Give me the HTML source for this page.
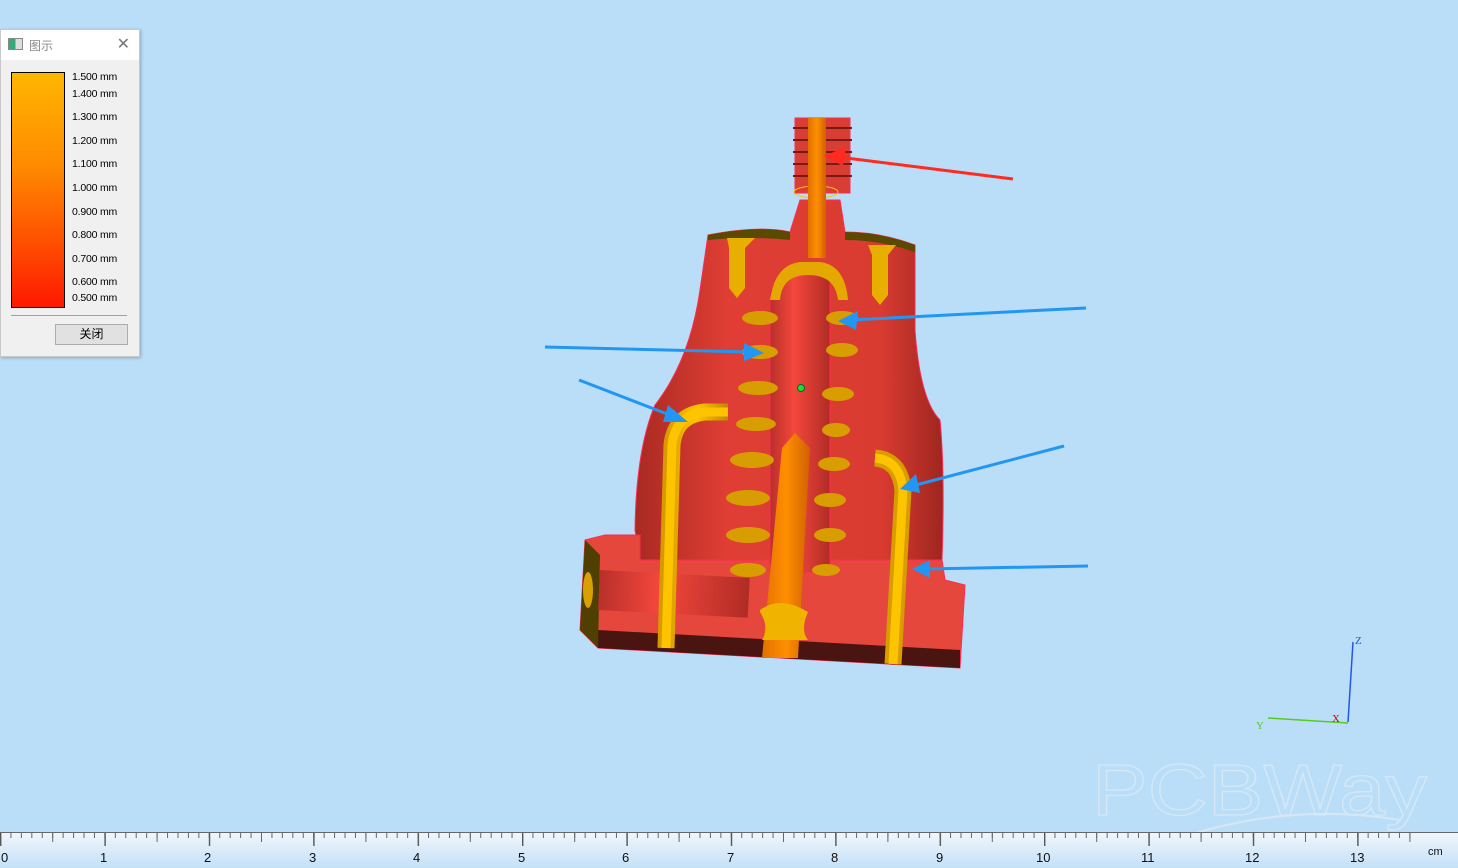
<!DOCTYPE html>
<html><head><meta charset="utf-8"><style>
html,body{margin:0;padding:0}
body{width:1458px;height:868px;background:#bbdef8;position:relative;overflow:hidden;font-family:"Liberation Sans","Noto Sans CJK SC",sans-serif}
#leg{position:absolute;left:0;top:29px;width:138px;height:326px;background:#f0f0f0;border:1px solid #c8c8c8;box-shadow:1px 1px 3px rgba(0,0,0,.25)}
#leg .tb{height:30px;background:#fff;position:relative;font-size:12px;color:#888}
.lbl{position:absolute;left:71px;font-size:10.5px;color:#000;white-space:nowrap;letter-spacing:-0.2px}
</style></head><body>
<svg width="1458" height="868" style="position:absolute;left:0;top:0">
<defs>
<linearGradient id="rul" x1="0" y1="0" x2="0" y2="1"><stop offset="0" stop-color="#f2f7fc"/><stop offset="1" stop-color="#c4e0f8"/></linearGradient>
<linearGradient id="cyl" x1="0" y1="0" x2="1" y2="0"><stop offset="0" stop-color="#b8302a"/><stop offset=".4" stop-color="#f4473c"/><stop offset="1" stop-color="#b02c25"/></linearGradient>
<linearGradient id="yel" x1="0" y1="0" x2="1" y2="0"><stop offset="0" stop-color="#d89a00"/><stop offset=".5" stop-color="#ffc400"/><stop offset="1" stop-color="#c08800"/></linearGradient>
<linearGradient id="org" x1="0" y1="0" x2="1" y2="0"><stop offset="0" stop-color="#e27000"/><stop offset=".5" stop-color="#ff8f00"/><stop offset="1" stop-color="#d06000"/></linearGradient>
<linearGradient id="body" x1="0" y1="0" x2="1" y2="0"><stop offset="0" stop-color="#a82a22"/><stop offset=".3" stop-color="#e03e34"/><stop offset=".8" stop-color="#d93b31"/><stop offset="1" stop-color="#9e261f"/></linearGradient>
<pattern id="minor" x="0" y="833" width="10.44" height="20" patternUnits="userSpaceOnUse"><rect x="0" y="0" width="1" height="5" fill="#666"/></pattern>
<pattern id="half" x="52.2" y="833" width="104.4" height="20" patternUnits="userSpaceOnUse"><rect x="0" y="0" width="1" height="9" fill="#666"/></pattern>
<pattern id="major" x="0" y="833" width="104.4" height="20" patternUnits="userSpaceOnUse"><rect x="0" y="0" width="1.4" height="13" fill="#555"/></pattern>
</defs>
<!-- model body -->
<path d="M708,235 Q760,225 790,232 L800,200 L840,200 L845,232 Q880,232 915,245 L915,330 Q920,400 940,420 Q945,470 942,560 L640,560 L635,530 Q636,450 655,405 Q690,360 700,290 Z" fill="url(#body)" stroke="#ff2a55" stroke-width="1"/>
<path d="M708,235 Q760,225 790,232 L790,240 Q750,236 708,240 Z" fill="#5a4a00"/>
<path d="M845,232 Q880,232 915,245 L915,252 Q880,240 845,240Z" fill="#5a4a00"/>
<!-- base -->
<path d="M585,540 L605,535 L640,535 L640,560 L942,560 L945,580 L965,585 L960,668 L598,648 L580,630 Z" fill="#e5473c" stroke="#ff2a55"/>
<path d="M598,630 L960,650 L960,668 L598,648 Z" fill="#4a1410"/>
<path d="M585,540 L600,555 L598,648 L580,630 Z" fill="#4f3f00"/>
<ellipse cx="588" cy="590" rx="5" ry="18" fill="#d8a000"/>
<rect x="600" y="570" width="150" height="40" fill="url(#cyl)" transform="rotate(3 600 570)"/>
<!-- threaded top -->
<rect x="795" y="118" width="55" height="75" fill="#d83e34" stroke="#ff2a55"/>
<g stroke="#7a1a14" stroke-width="2"><line x1="793" y1="128" x2="852" y2="128"/><line x1="793" y1="140" x2="852" y2="140"/><line x1="793" y1="152" x2="852" y2="152"/><line x1="793" y1="164" x2="852" y2="164"/><line x1="793" y1="176" x2="852" y2="176"/></g>
<ellipse cx="816" cy="192" rx="22" ry="6" fill="none" stroke="#ffc400"/>
<!-- inner cylinder -->
<path d="M783,280 Q805,262 830,280 L830,572 L770,572 L770,290 Z" fill="url(#cyl)" stroke="#ff2a55"/>
<path d="M770,300 Q775,265 800,262 L820,262 Q845,265 848,300 L838,300 Q835,275 808,275 Q782,275 780,300Z" fill="#e4a800"/>
<!-- fins -->
<g fill="#d89d00">
<ellipse cx="760" cy="318" rx="18" ry="7"/><ellipse cx="842" cy="318" rx="16" ry="7"/>
<ellipse cx="760" cy="352" rx="18" ry="7"/><ellipse cx="842" cy="350" rx="16" ry="7"/>
<ellipse cx="758" cy="388" rx="20" ry="7"/><ellipse cx="838" cy="394" rx="16" ry="7"/>
<ellipse cx="756" cy="424" rx="20" ry="7"/><ellipse cx="836" cy="430" rx="14" ry="7"/>
<ellipse cx="752" cy="460" rx="22" ry="8"/><ellipse cx="834" cy="464" rx="16" ry="7"/>
<ellipse cx="748" cy="498" rx="22" ry="8"/><ellipse cx="830" cy="500" rx="16" ry="7"/>
<ellipse cx="748" cy="535" rx="22" ry="8"/><ellipse cx="830" cy="535" rx="16" ry="7"/>
<ellipse cx="748" cy="570" rx="18" ry="7"/><ellipse cx="826" cy="570" rx="14" ry="6"/>
</g>
<!-- central orange rod -->
<rect x="808" y="118" width="18" height="140" fill="url(#org)"/>
<path d="M782,448 L795,433 L810,448 L798,658 L762,658Z" fill="url(#org)"/>
<path d="M760,610 Q780,595 808,612 Q800,630 808,640 L762,640 Q770,628 760,612Z" fill="#f0b400"/>
<!-- bolts -->
<path d="M727,238 L755,238 L745,248 L745,288 L737,298 L729,288 L729,248Z" fill="#e8ae00"/>
<path d="M868,245 L896,245 L888,255 L888,295 L880,305 L872,295 L872,255Z" fill="#e8ae00"/>
<!-- yellow U pipes -->
<path d="M666,648 L672,445 Q675,415 705,412 L728,412" fill="none" stroke="url(#yel)" stroke-width="17"/>
<path d="M666,648 L672,445 Q675,415 705,412 L728,412" fill="none" stroke="#ffc400" stroke-width="9"/>
<path d="M893,664 L903,490 Q900,460 875,458" fill="none" stroke="#d89d00" stroke-width="17"/>
<path d="M893,664 L903,490 Q900,460 875,458" fill="none" stroke="#ffc400" stroke-width="9"/>
<circle cx="801" cy="388" r="3.5" fill="#20e020" stroke="#064"/>
<!-- arrows -->
<g fill="#2196f3" stroke="#2196f3" stroke-width="3">
<line x1="1086" y1="308" x2="850" y2="320"/><path d="M838,321 L858,311 L856,330Z" stroke="none"/>
<line x1="545" y1="347" x2="750" y2="352"/><path d="M764,353 L744,343 L744,361Z" stroke="none"/>
<line x1="579" y1="380" x2="675" y2="417"/><path d="M688,422 L668,405 L663,422Z" stroke="none"/>
<line x1="1064" y1="446" x2="912" y2="486"/><path d="M900,489 L916,474 L920,493Z" stroke="none"/>
<line x1="1088" y1="566" x2="925" y2="569"/><path d="M912,569 L930,560 L930,578Z" stroke="none"/>
</g>
<line x1="1013" y1="179" x2="838" y2="157" stroke="#ff2a20" stroke-width="3"/>
<path d="M824,156 L846,147 L843,166Z" fill="#ff2a20"/>
<!-- axes -->
<polyline points="1348,722 1353,642" stroke="#2255ee" fill="none" stroke-width="1.5"/>
<text x="1355" y="644" font-size="11" fill="#2255ee" font-family="Liberation Serif">Z</text>
<polyline points="1268,718 1348,723" stroke="#55cc22" fill="none" stroke-width="1.5"/>
<text x="1256" y="729" font-size="11" fill="#55cc22" font-family="Liberation Serif">Y</text>
<text x="1332" y="722" font-size="11" fill="#cc0000" font-family="Liberation Serif">X</text>
<!-- watermark -->
<text x="1092" y="815" font-size="72" fill="none" stroke="#d6e8f6" stroke-width="1.2" font-family="Liberation Sans" textLength="335" lengthAdjust="spacingAndGlyphs">PCBWay</text>
<path d="M1160,845 Q1280,800 1400,820" fill="none" stroke="#d6e8f6" stroke-width="2"/>
<!-- ruler -->
<rect x="0" y="832" width="1458" height="36" fill="url(#rul)"/>
<line x1="0" y1="832.5" x2="1458" y2="832.5" stroke="#666"/>
<rect x="0" y="833" width="1414" height="5" fill="url(#minor)"/>
<rect x="0" y="833" width="1414" height="9" fill="url(#half)"/>
<rect x="0" y="833" width="1414" height="13" fill="url(#major)"/>
<g font-size="13" fill="#111" font-family="Liberation Sans Narrow, Liberation Sans" >
<text x="1" y="862">0</text><text x="100" y="862">1</text><text x="204" y="862">2</text><text x="309" y="862">3</text><text x="413" y="862">4</text><text x="518" y="862">5</text><text x="622" y="862">6</text><text x="727" y="862">7</text><text x="831" y="862">8</text><text x="936" y="862">9</text><text x="1036" y="862">10</text><text x="1141" y="862">11</text><text x="1245" y="862">12</text><text x="1350" y="862">13</text>
<text x="1428" y="855" font-size="11">cm</text></g>
</svg>
<div id="leg">
<div class="tb"><span style="position:absolute;left:7px;top:8px;width:13px;height:10px;border:1px solid #888;background:linear-gradient(90deg,#3a7 0,#3a7 50%,#ddd 50%)"></span><span style="position:absolute;left:28px;top:7px">图示</span><span style="position:absolute;right:9px;top:4px;font-size:16px;color:#777">✕</span></div>
<div style="position:absolute;left:10px;top:42px;width:52px;height:234px;border:1px solid #000;background:linear-gradient(#ffb600,#ff8a00 40%,#ff4a00 75%,#ff1800)"></div>
<div class="lbl" style="top:41px">1.500 mm</div><div class="lbl" style="top:58px">1.400 mm</div><div class="lbl" style="top:81px">1.300 mm</div><div class="lbl" style="top:105px">1.200 mm</div><div class="lbl" style="top:128px">1.100 mm</div><div class="lbl" style="top:152px">1.000 mm</div><div class="lbl" style="top:176px">0.900 mm</div><div class="lbl" style="top:199px">0.800 mm</div><div class="lbl" style="top:223px">0.700 mm</div><div class="lbl" style="top:246px">0.600 mm</div><div class="lbl" style="top:262px">0.500 mm</div>
<div style="position:absolute;left:10px;top:285px;width:116px;height:1px;background:#a0a0a0"></div>
<div style="position:absolute;left:54px;top:294px;width:71px;height:19px;border:1px solid #adadad;background:#e1e1e1;font-size:12px;text-align:center;line-height:19px">关闭</div>
</div>
</body></html>
